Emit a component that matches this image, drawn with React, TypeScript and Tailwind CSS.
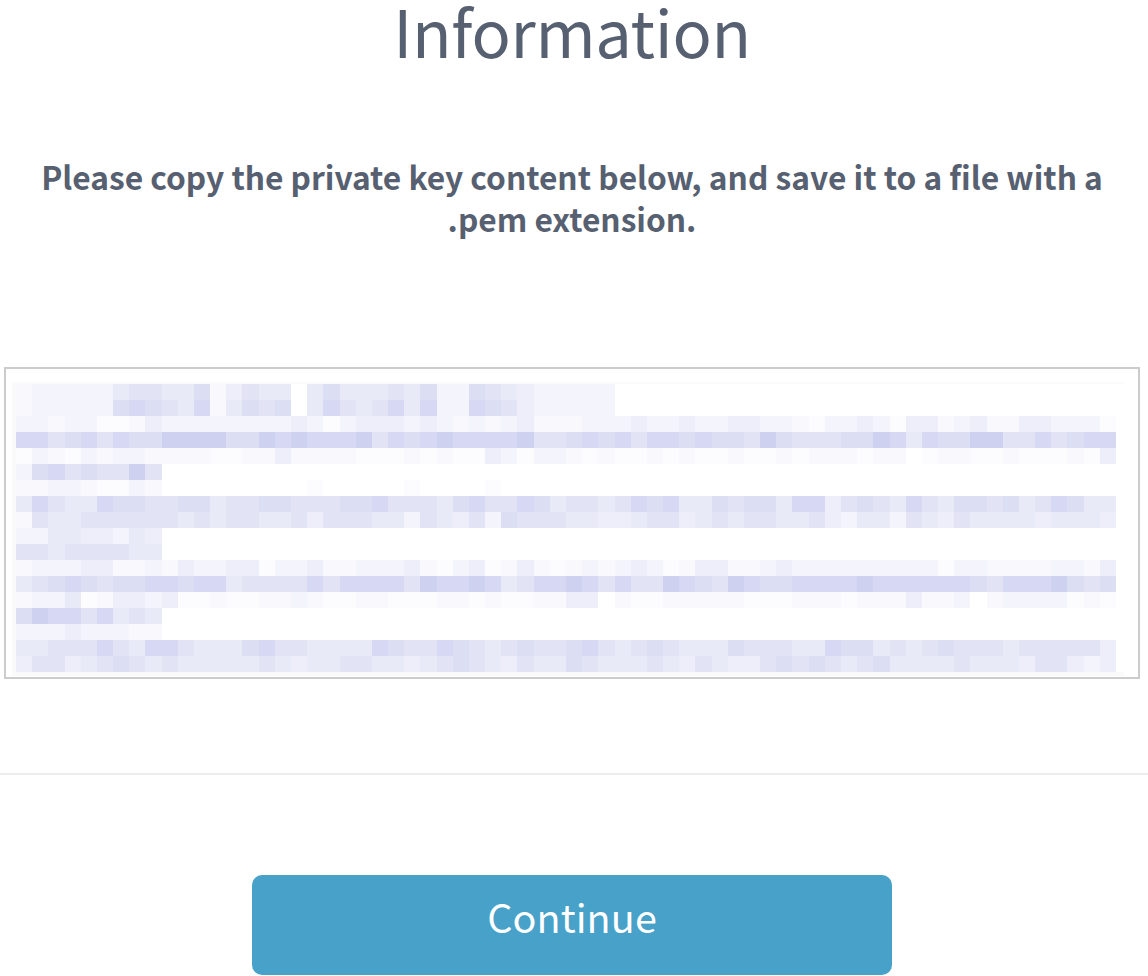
const SHADES: Record<string, string> = {
  '0': 'bg-white',
  '1': 'bg-[#fcfcfe]',
  '2': 'bg-[#f8f8fd]',
  '3': 'bg-[#f3f4fc]',
  '4': 'bg-[#eeeefa]',
  '5': 'bg-[#e8eaf8]',
  '6': 'bg-[#e2e4f6]',
  '7': 'bg-[#dcdef4]',
  '8': 'bg-[#d7d9f4]',
  '9': 'bg-[#cfd1f1]',
};

const COLUMNS = 68;

// One digit per redacted block, from 0 (blank) to 9 (darkest).
const ROWS = [
  '23333356655724655' + '05755565733765433' + '333',
  '23333378765825767' + '05865685833876433' + '333',
  '33233112433333333' + '43134443432323422' + '23334334334433213' + '3' + '4314423422443331',
  '88678687799997798' + '98889687898888966' + '787868878776976667' + '7985877996686788',
  '13213233222211224' + '22221112121143133' + '212112121121121222' + '1220122112111214',
  '378676696',
  '223321132' + '000000000100000100001',
  '58655877667756677' + '66677866657866875' + '665687855767758846' + '7658657767568755',
  '26556666665656655' + '64666553654637666' + '554456645656655643' + '5536546555545554',
  '335544354',
  '665666655',
  '23334422324334413' + '34223334213412421' + '232343124422343333' + '3333313322223324',
  '56787677887885666' + '68688886988985688' + '986866987698778888' + '9888888768889767',
  '23351244341121122' + '32112211122121122' + '440211222221112221' + '2224223023333121',
  '798868565',
  '333433322',
  '55666865886555786' + '65555876687656766' + '786567655576665587' + '7565676665666664',
  '46645676565555565' + '45566554567654655' + '765556546544676765' + '6755556555466434',
];

function RedactedKey() {
  return (
    <div className="w-[1112px] bg-[#fafafa] pt-0.5 pb-1 pl-1">
      <div className="bg-white pr-2">
        {ROWS.map((row, y) => (
          <div key={y} className="grid h-4 grid-cols-[repeat(68,minmax(0,1fr))]">
            {row.padEnd(COLUMNS, '0').split('').map((shade, x) => (
              <span key={x} className={SHADES[shade]} />
            ))}
          </div>
        ))}
      </div>
    </div>
  );
}

export default function App() {
  return (
    <main className="h-[976px] w-[1148px] overflow-hidden bg-white font-['Noto_Sans_CJK_SC','Open_Sans',sans-serif] text-[#566070]">
      <h1 className="h-[155px] pr-1 text-center text-[65px] leading-[60px] font-normal tracking-[-0.3px]">
        Information
      </h1>
      <p className="h-[212px] pr-1 text-center text-[31.7px] leading-[42px] font-bold">
        Please copy the private key content below, and save it to a file with a
        <br />
        .pem extension.
      </p>
      <section className="mr-2 ml-1 h-[312px] border-2 border-[#cccccc] bg-white pt-[13px] pl-1.5">
        <RedactedKey />
      </section>
      <hr className="mt-[94px] border-t-2 border-[#ececec]" />
      <button className="mt-[100px] ml-[252px] flex h-[100px] w-[640px] justify-center rounded-[10px] bg-[#47a1c8] pt-[11px] text-[39.5px] leading-[60px] tracking-[0.1px] text-white">
        Continue
      </button>
    </main>
  );
}
